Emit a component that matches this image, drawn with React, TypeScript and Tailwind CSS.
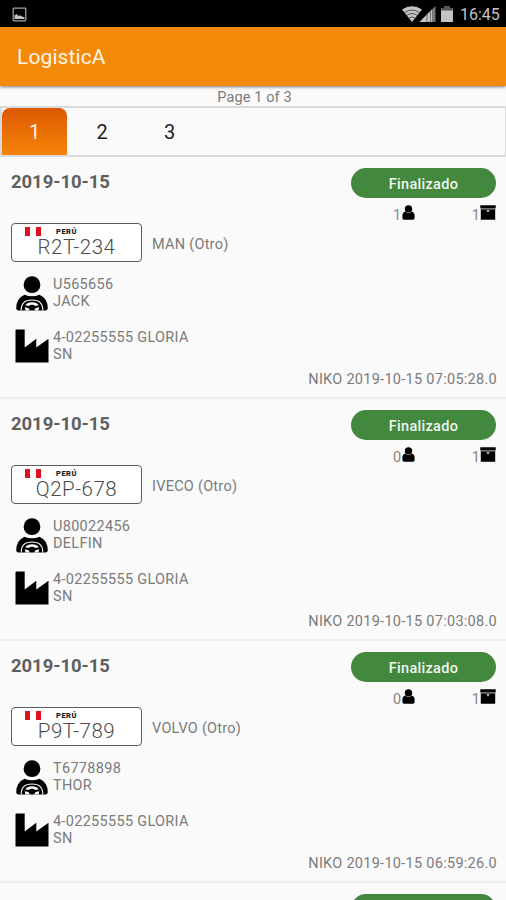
import React from 'react';

type Entry = {
  plate: string;
  brand: string;
  people: number;
  boxes: number;
  code: string;
  driver: string;
  stamp: string;
};

const entries: Entry[] = [
  { plate: 'R2T-234', brand: 'MAN (Otro)', people: 1, boxes: 1, code: 'U565656', driver: 'JACK', stamp: '07:05:28.0' },
  { plate: 'Q2P-678', brand: 'IVECO (Otro)', people: 0, boxes: 1, code: 'U80022456', driver: 'DELFIN', stamp: '07:03:08.0' },
  { plate: 'P9T-789', brand: 'VOLVO (Otro)', people: 0, boxes: 1, code: 'T6778898', driver: 'THOR', stamp: '06:59:26.0' },
];

function StatusBar() {
  return (
    <div className="flex h-[27px] shrink-0 items-center justify-between bg-black pl-3 pr-[5px] text-[#c4c4c4]">
      <svg width="15" height="15" viewBox="0 0 15 15" className="mt-px">
        <rect x="1.2" y="1.2" width="12.6" height="12.6" rx="0.8" fill="none" stroke="#a8a8a8" strokeWidth="1.2" />
        <path d="M2.5 12V8.5L4.5 7l2 2 1.5-.8L10 9.5l2.500 .8V12Z" fill="#c4c4c4" />
      </svg>
      <div className="flex items-center">
        <svg width="54" height="18" viewBox="0 0 54 18" className="mr-[5px]">
          <path d="M1 4.500Q11 -2 21 4.500L11 17Z" fill="#c4c4c4" />
          <path d="M3.500 7.500Q11 2.500 18.500 7.500M5.800 10.300Q11 6.800 16.200 10.300M8 13Q11 11 14 13" fill="none" stroke="#333" strokeWidth="0.8" />
          <path d="M18.500 17L34.500 1V17Z" fill="#777" />
          <path d="M18.500 17L31 4.500V17Z" fill="#c4c4c4" />
          <path d="M26 8v9M29.500 5v12" stroke="#333" strokeWidth="0.6" />
          <path d="M43 1h6v2h3v3H40V3h3Z" fill="#555" />
          <path d="M40 5.500h12V17H40Z" fill="#c4c4c4" />
        </svg>
        <span className="w-[41px] whitespace-nowrap pt-[2px] text-[16px] leading-[25px]">16:45</span>
      </div>
    </div>
  );
}

function PersonIcon() {
  return (
    <svg width="13" height="15" viewBox="0 0 13 15">
      <circle cx="6.500" cy="3.900" r="3.700" />
      <path d="M3.300 6.500Q6.500 9.500 9.700 6.500Q12.600 7.400 12.600 10.500V13Q12.600 14.700 11 14.700H2Q.4 14.700 .4 13V10.500Q.4 7.400 3.300 6.500Z" />
    </svg>
  );
}

function BoxIcon() {
  return (
    <svg width="16" height="15" viewBox="0 0 16 15">
      <path d="M.3 .3H15.700V3.600H.3ZM.8 4.200H15.200V14.700H.8Z" />
      <path d="M.8 3.900H15.200" stroke="#666" strokeWidth="0.6" />
      <path d="M6.200 5.300H9.800L8 7.400Z" fill="#ddd" />
    </svg>
  );
}

function DriverIcon() {
  return (
    <svg width="34" height="35" viewBox="0 0 34 35">
      <circle cx="17" cy="8.700" r="8.400" />
      <path d="M1.200 32.500Q1 22.500 9.500 18.700Q17 22 24.500 18.700Q33 22.500 32.800 32.500Q32.500 34.500 30.500 34.500H3.500Q1.500 34.500 1.200 32.500Z" />
      <path d="M6.200 34.500Q6 24 17 24Q28 24 27.800 34.500" fill="none" stroke="#fafafa" strokeWidth="1.100" />
      <path d="M10.200 29.300Q12 26.300 17 26.300Q22 26.300 23.800 29.300L20.300 30Q17 27.500 13.700 30Z" fill="#fafafa" />
      <path d="M9.700 31.200L13.300 32 15 34.500H10.500ZM24.300 31.200L20.700 32 19 34.500H23.500Z" fill="#fafafa" />
    </svg>
  );
}

function FactoryIcon() {
  return (
    <svg width="34" height="34" viewBox="0 0 34 34">
      <path d="M1 .5H9.700V18.500L21.300 9.800V18.500L33.500 9.800V33.500H.5V1Z" />
    </svg>
  );
}

function Plate({ text }: { text: string }) {
  return (
    <div className="flex h-[39px] w-[131px] flex-col rounded-[4px] border border-[#5c5c5c] bg-white pt-[3px]">
      <div className="flex h-[9px] shrink-0 pl-[13px]">
        <span className="w-[5px] bg-[#dc1420]" />
        <span className="ml-[6px] w-[5px] bg-[#dc1420]" />
        <span className="ml-[15px] text-[7.500px] font-black leading-[9px] tracking-[0.5px] text-[#222]">PERÚ</span>
      </div>
      <span className="text-center text-[20.500px] font-light leading-[23px] tracking-[0.5px] text-[#4c4c4c]">{text}</span>
    </div>
  );
}

function RowHeading() {
  return <h2 className="text-[18.500px] font-bold leading-[28px] tracking-[-0.060px] text-[#5f5f5f]">2019-10-15</h2>;
}

function StatusPill() {
  return (
    <div className="h-[30px] shrink-0 rounded-full bg-[#43883f] text-center text-[14.500px] font-medium leading-[33px] tracking-[0.300px] text-[#f0f6ef]">
      Finalizado
    </div>
  );
}

function Row({ item }: { item: Entry }) {
  return (
    <article className="flex h-[242px] shrink-0 flex-col border-b-2 border-[#eeeeee] pl-[11px] pr-[9px] pt-[11px]">
      <div className="flex h-[55px] justify-between">
        <RowHeading />
        <div className="mr-px flex w-[145px] flex-col">
          <StatusPill />
          <div className="mt-[7px] flex h-[17px] justify-between pl-[42px] text-[14.500px] leading-[21px] text-[#858585]">
            <div className="flex gap-px"><span>{item.people}</span><PersonIcon /></div>
            <div className="flex"><span>{item.boxes}</span><BoxIcon /></div>
          </div>
        </div>
      </div>
      <div className="flex items-center gap-[11px]">
        <Plate text={item.plate} />
        <span className="-ml-px pt-[4px] text-[14.500px] leading-[18px] tracking-[0.250px] text-[#7b7b7b]">{item.brand}</span>
      </div>
      <div className="mt-[14px] flex h-[37px] gap-[4px] pl-[4px] text-[14.500px] leading-[17px] tracking-[0.300px] text-[#7b7b7b]">
        <DriverIcon />
        <div>{item.code}<br />{item.driver}</div>
      </div>
      <div className="mt-[16px] flex h-[35px] gap-[4px] pl-[4px] text-[14.500px] leading-[17px] tracking-[0.300px] text-[#7b7b7b]">
        <FactoryIcon />
        <div>4-02255555 GLORIA<br />SN</div>
      </div>
      <div className="mt-[7px] text-right text-[14.500px] leading-[18px] tracking-[0.280px] text-[#7b7b7b]">NIKO 2019-10-15 {item.stamp}</div>
    </article>
  );
}

export default function App() {
  return (
    <main className="flex h-[900px] w-[506px] flex-col overflow-hidden bg-[#fafafa] font-[Roboto,sans-serif]">
      <StatusBar />
      <header className="z-10 h-[59px] shrink-0 bg-[#f48908] pl-[17px] text-[21px] leading-[61px] tracking-[0.1px] text-[#fff5e6] shadow-[0_1px_3px_rgba(0,0,0,0.5)]">LogisticA</header>
      <div className="h-[20px] shrink-0 pl-[3px] text-center text-[14.500px] leading-[24px] tracking-[0.1px] text-[#7b7b7b]">Page 1 of 3</div>
      <nav className="flex h-[51px] shrink-0 border-2 border-r-1 border-[#dadada] text-center text-[20px] leading-[49px] text-[#222]">
        <span className="w-[65px] rounded-t-[8px] bg-linear-to-b from-[#dc5702] to-[#f58408] text-[#fff0df]">1</span>
        <span className="w-[70px]">2</span>
        <span className="w-[65px]">3</span>
      </nav>
      {entries.map((item) => <Row key={item.plate} item={item} />)}
      <article className="flex h-[17px] shrink-0 justify-between overflow-hidden pl-[11px] pr-[10px] pt-[11px]">
        <RowHeading />
        <div className="w-[145px]"><StatusPill /></div>
      </article>
    </main>
  );
}
